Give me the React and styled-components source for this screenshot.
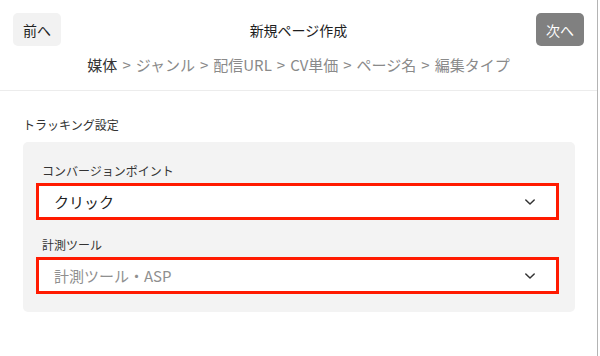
import styled, { createGlobalStyle } from 'styled-components';

const GlobalStyle = createGlobalStyle`
    html, body {
        margin: 0;
        padding: 0;
        background: #ffffff;
    }
    body {
        font-family: "Noto Sans CJK JP", "Noto Sans", sans-serif;
        color: #222222;
    }
`;

const steps = ['媒体', 'ジャンル', '配信URL', 'CV単価', 'ページ名', '編集タイプ'];

const fields = [
    { label: 'コンバージョンポイント', value: 'クリック', placeholder: false },
    { label: '計測ツール', value: '計測ツール・ASP', placeholder: true },
];

const Chevron = () => (
    <svg width="12" height="8" viewBox="0 0 12 8" fill="none">
        <path d="M1.8 2 L6 6 L10.2 2" stroke="#333" strokeWidth="1.5" strokeLinecap="round" strokeLinejoin="round" />
    </svg>
);

const App = () => {
    return (
        <>
            <GlobalStyle />
            <S.Page>
                {/* Header */}
                <S.Header>
                    <S.TopRow>
                        <S.Button>前へ</S.Button>
                        <S.Title>新規ページ作成</S.Title>
                        <S.Button $primary>次へ</S.Button>
                    </S.TopRow>
                    <S.Steps>
                        {steps.map((step, i) => (
                            <S.Step key={step} $active={i === 0}>
                                {i > 0 && <S.Sep>&gt;</S.Sep>}
                                {step}
                            </S.Step>
                        ))}
                    </S.Steps>
                </S.Header>
                {/* Body */}
                <S.Body>
                    <S.SectionTitle>トラッキング設定</S.SectionTitle>
                    <S.Panel>
                        {fields.map((f) => (
                            <S.Field key={f.label}>
                                <S.Label>{f.label}</S.Label>
                                <S.Select>
                                    <S.Value $placeholder={f.placeholder}>{f.value}</S.Value>
                                    <Chevron />
                                </S.Select>
                            </S.Field>
                        ))}
                    </S.Panel>
                </S.Body>
            </S.Page>
        </>
    );
};

export default App;

const Page = styled.div`
    width: 597px;
    height: 356px;
    border-right: 1px solid #b4b4b4;
    box-sizing: content-box;
    background: #ffffff;
`;

const Header = styled.div`
    padding: 13px 13px 15px;
    border-bottom: 1px solid #ececec;
`;

const TopRow = styled.div`
    display: flex;
    align-items: center;
    justify-content: space-between;
    height: 33px;
`;

const Button = styled.div`
    width: 48px;
    height: 33px;
    display: flex;
    align-items: center;
    justify-content: center;
    border-radius: 5px;
    font-size: 14px;
    background: ${({ $primary }) => ($primary ? '#808080' : '#f2f2f2')};
    color: ${({ $primary }) => ($primary ? '#ffffff' : '#222222')};
`;

const Title = styled.div`
    font-size: 14px;
    color: #1e1e1e;
`;

const Steps = styled.div`
    margin-top: 9px;
    display: flex;
    justify-content: center;
    font-size: 15px;
    line-height: 20px;
`;

const Step = styled.span`
    color: ${({ $active }) => ($active ? '#333333' : '#8a8a8a')};
    white-space: pre;
`;

const Sep = styled.span`
    color: #8a8a8a;
    padding: 0 5px;
`;

const Body = styled.div`
    padding: 26px 22px 0 23px;
`;

const SectionTitle = styled.div`
    font-size: 12px;
    line-height: 16px;
    color: #333333;
`;

const Panel = styled.div`
    margin-top: 9px;
    background: #f3f3f3;
    border-radius: 5px;
    padding: 21px 16px 18px 13px;
    display: flex;
    flex-direction: column;
    gap: 17px;
`;

const Field = styled.div`
    display: flex;
    flex-direction: column;
`;

const Label = styled.div`
    font-size: 12px;
    line-height: 16px;
    color: #333333;
    margin: 0 0 4px 6px;
`;

const Select = styled.div`
    height: 37px;
    box-sizing: border-box;
    border: 3px solid #ff1a00;
    background: #ffffff;
    display: flex;
    align-items: center;
    justify-content: space-between;
    padding: 0 20px 0 15px;
`;

const Value = styled.span`
    font-size: 15px;
    color: ${({ $placeholder }) => ($placeholder ? '#8f8f8f' : '#222222')};
`;

const S = {
    Page,
    Header,
    TopRow,
    Button,
    Title,
    Steps,
    Step,
    Sep,
    Body,
    SectionTitle,
    Panel,
    Field,
    Label,
    Select,
    Value,
};
